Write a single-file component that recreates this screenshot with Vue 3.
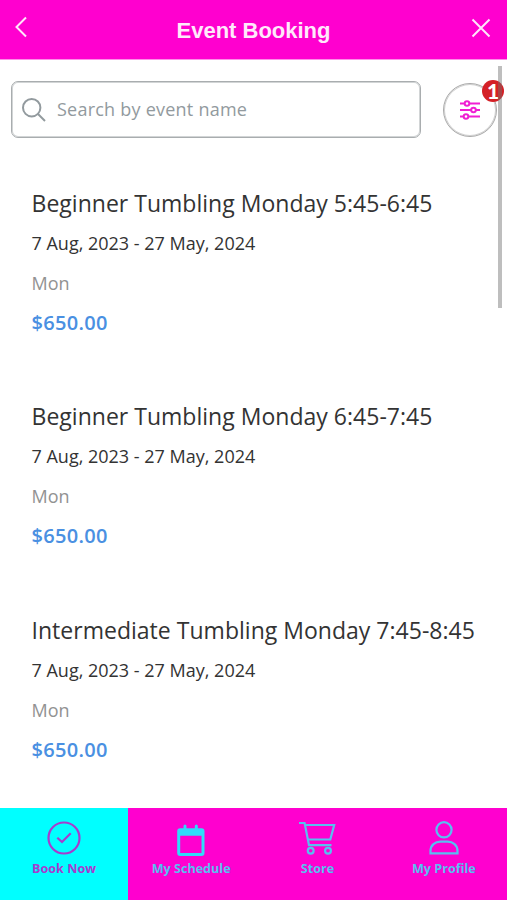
<template>
  <div class="booking-page">
    <header class="top-bar">
      <button class="bar-button" aria-label="Back">
        <svg width="12" height="22" viewBox="0 0 12 22">
          <path d="M11 1.5 L1.5 11 L11 20.5" />
        </svg>
      </button>
      <h1>Event Booking</h1>
      <button class="bar-button close" aria-label="Close">
        <svg width="20" height="20" viewBox="0 0 20 20">
          <path d="M1.5 1.5 L18.5 18.5 M18.5 1.5 L1.5 18.5" />
        </svg>
      </button>
    </header>

    <main class="content">
      <div class="search-row">
        <div class="search-box">
          <svg width="24" height="24" viewBox="0 0 24 24">
            <circle cx="9.7" cy="9.7" r="8.7" />
            <path d="M16 16 L23 23" />
          </svg>
          <span>Search by event name</span>
        </div>
        <button class="filter-button" aria-label="Filters">
          <svg width="22" height="20" viewBox="0 0 22 20">
            <path d="M1 3.5 H21 M1 10 H21 M1 16.5 H21" />
            <circle cx="8" cy="3.5" r="2.3" />
            <circle cx="14.5" cy="10" r="2.3" />
            <circle cx="7" cy="16.5" r="2.3" />
          </svg>
          <span class="badge">{{ filterCount }}</span>
        </button>
      </div>

      <article v-for="event in events" :key="event.name" class="event">
        <h2>{{ event.name }}</h2>
        <p class="dates">{{ event.dates }}</p>
        <p class="day">{{ event.day }}</p>
        <p class="price">{{ event.price }}</p>
      </article>

      <div class="scroll-thumb"></div>
    </main>

    <nav class="tab-bar">
      <button
        v-for="tab in tabs"
        :key="tab.id"
        :class="['tab', { active: tab.id === activeTab }]"
        @click="activeTab = tab.id"
      >
        <svg v-if="tab.id === 'book'" width="36" height="36" viewBox="0 0 36 36">
          <circle cx="18" cy="18" r="15.5" />
          <path d="M11.3 17.7 L16 22 L24.7 13.2" />
        </svg>
        <svg v-else-if="tab.id === 'schedule'" width="36" height="36" viewBox="0 0 36 36">
          <path
            class="solid"
            fill-rule="evenodd"
            d="M10.5 6 Q10.5 4.5 12 4.5 Q13.5 4.5 13.5 6 V8.3 H21.8 V6 Q21.8 4.5 23.3 4.5 Q24.8 4.5 24.8 6 V8.3 H28.5 Q31.5 8.3 31.5 11.3 V33 Q31.5 36 28.5 36 H7.2 Q4.2 36 4.2 33 V11.3 Q4.2 8.3 7.2 8.3 H10.5 Z M7.2 15.7 V33 H28.5 V15.7 Z"
          />
        </svg>
        <svg v-else-if="tab.id === 'store'" width="38" height="36" viewBox="0 0 38 36">
          <path d="M1 3 H6.6 L11 25.2 H33.5" />
          <path d="M7.3 5 H36.2 L32.3 19.5 H10.2" />
          <circle cx="12.7" cy="30.7" r="2.9" />
          <circle cx="30" cy="30.7" r="2.9" />
        </svg>
        <svg v-else width="36" height="36" viewBox="0 0 36 36">
          <circle cx="18" cy="9.8" r="7.6" />
          <path d="M4.5 33.3 V31 C4.5 25 9 21.7 14.5 21.7 H21.5 C27 21.7 31.5 25 31.5 31 V33.3 Z" />
        </svg>
        <span>{{ tab.label }}</span>
      </button>
    </nav>
  </div>
</template>

<script setup>
import { ref } from 'vue'

const filterCount = ref(1)
const activeTab = ref('book')

const dates = '7 Aug, 2023 - 27 May, 2024'

const events = [
  { name: 'Beginner Tumbling Monday 5:45-6:45', dates, day: 'Mon', price: '$650.00' },
  { name: 'Beginner Tumbling Monday 6:45-7:45', dates, day: 'Mon', price: '$650.00' },
  { name: 'Intermediate Tumbling Monday 7:45-8:45', dates, day: 'Mon', price: '$650.00' }
]

const tabs = [
  { id: 'book', label: 'Book Now' },
  { id: 'schedule', label: 'My Schedule' },
  { id: 'store', label: 'Store' },
  { id: 'profile', label: 'My Profile' }
]
</script>

<style>
body {
  margin: 0;
}
</style>

<style scoped>
.booking-page {
  display: flex;
  flex-direction: column;
  height: 900px;
  overflow: hidden;
  background: #fff;
  font-family: "Open Sans", sans-serif;
  color: #333;
}

button {
  border: 0;
  padding: 0;
  background: none;
  font: inherit;
}

svg {
  display: block;
  flex-shrink: 0;
  fill: none;
  stroke: currentColor;
  stroke-width: 2;
}

h1, h2, p {
  margin: 0;
  white-space: nowrap;
}

.top-bar {
  display: flex;
  justify-content: space-between;
  flex-shrink: 0;
  box-sizing: border-box;
  height: 60px;
  padding: 16px 16px 0 15px;
  background: #ff00cf;
  border-bottom: 1px solid #ff8de9;
  color: #fff;
}

.bar-button {
  display: flex;
  align-items: flex-start;
  width: 22px;
  color: #ffe6fb;
}

.close {
  justify-content: flex-end;
  padding-top: 2px;
}

h1 {
  padding-left: 1px;
  font: bold 22px/29px "Liberation Sans", sans-serif;
  color: #ffe9fb;
}

.content {
  position: relative;
  flex: 1;
  min-height: 0;
}

.search-row {
  display: flex;
  align-items: center;
  justify-content: space-between;
  height: 57px;
  padding: 21px 10px 0 11px;
  margin-bottom: 44.6px;
}

.search-box {
  display: flex;
  align-items: center;
  gap: 11px;
  box-sizing: border-box;
  width: 410px;
  height: 57px;
  padding-left: 10px;
  border: 1px solid #a9adaf;
  border-radius: 7px;
  box-shadow: inset 0 0 0 1px #d2d5d6;
  color: #929a9e;
  font-size: 18px;
}

.search-box span {
  padding-bottom: 2px;
  font-weight: 500;
  letter-spacing: 0.23px;
  white-space: nowrap;
}

.filter-button {
  position: relative;
  display: flex;
  align-items: center;
  justify-content: center;
  box-sizing: border-box;
  width: 54px;
  height: 54px;
  border: 1px solid #a9a9a9;
  border-radius: 50%;
  box-shadow: inset 0 0 0 1px #d2d2d2;
  color: #f01fd3;
}

.filter-button circle {
  fill: #fff;
}

.badge {
  position: absolute;
  top: -4px;
  right: -8px;
  width: 22px;
  height: 22px;
  border-radius: 50%;
  background: #d42026;
  color: #fff;
  font: 900 21px/21px Lato, sans-serif;
  text-align: center;
}

.event {
  height: 213.6px;
  padding-left: 31.5px;
}

h2 {
  font-size: 23px;
  font-weight: 400;
  letter-spacing: 0.02px;
  line-height: 40px;
}

.dates {
  font-size: 18px;
  line-height: 41px;
}

.day {
  color: #929292;
  font-size: 18px;
  line-height: 38px;
}

.price {
  color: #4a90e2;
  font-size: 20px;
  font-weight: 600;
  letter-spacing: 0.3px;
  line-height: 41px;
}

.scroll-thumb {
  position: absolute;
  top: 6px;
  right: 5px;
  width: 4px;
  height: 242px;
  background: rgba(110, 110, 110, 0.45);
}

.tab-bar {
  position: relative;
  display: grid;
  grid-template-columns: 128px repeat(3, 1fr);
  flex-shrink: 0;
  height: 92px;
  background: #ff00cf;
}

.tab {
  display: flex;
  flex-direction: column;
  align-items: center;
  padding-top: 12px;
  color: #58bff0;
}

.tab svg {
  stroke-width: 2.2;
}

.tab.active {
  background: #00ffff;
  color: #a63cce;
}

.tab span {
  margin-top: 4px;
  font-size: 12.6px;
  font-weight: 700;
  line-height: 18px;
}

.tab .solid {
  fill: #30dcfa;
  stroke: none;
}
</style>
